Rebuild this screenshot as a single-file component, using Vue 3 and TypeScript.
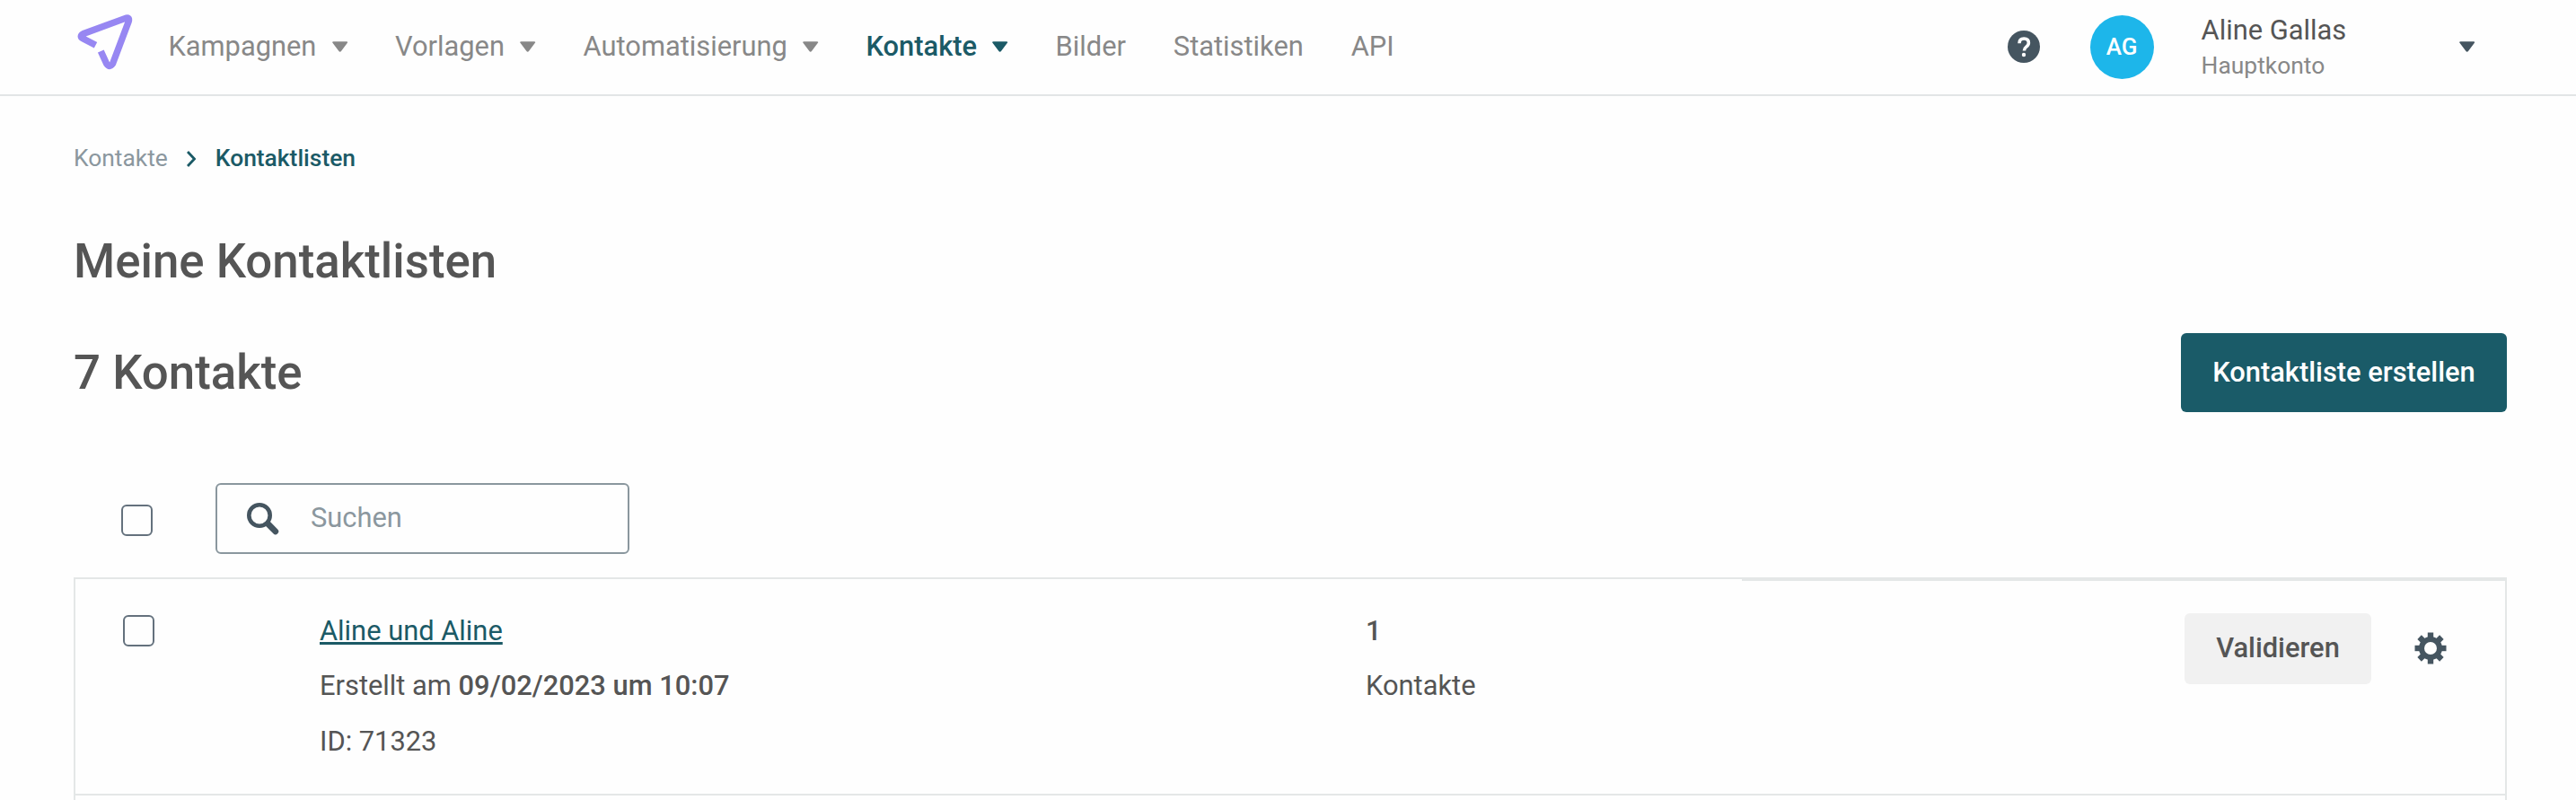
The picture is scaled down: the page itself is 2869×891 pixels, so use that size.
<script setup lang="ts">
interface NavItem { label: string; menu: boolean; active?: boolean }
interface ContactList { name: string; created: string; id: number; count: number }

const nav: NavItem[] = [
  { label: 'Kampagnen', menu: true },
  { label: 'Vorlagen', menu: true },
  { label: 'Automatisierung', menu: true },
  { label: 'Kontakte', menu: true, active: true },
  { label: 'Bilder', menu: false },
  { label: 'Statistiken', menu: false },
  { label: 'API', menu: false },
]
const lists: ContactList[] = [
  { name: 'Aline und Aline', created: '09/02/2023 um 10:07', id: 71323, count: 1 },
]
</script>

<template>
  <div class="page">
    <header class="topbar">
      <svg class="logo" viewBox="0 0 68 68" fill="none">
        <path d="M24.500 36.300 11 29.300Q5.500 26.400 11 23.500L57 6.600Q62.800 4.400 61.200 10L43.500 57Q40 62 36.700 57L30.300 43" />
      </svg>
      <nav class="nav">
        <a v-for="item in nav" :key="item.label" class="nav-item" :class="{ active: item.active }">
          <span>{{ item.label }}</span>
          <svg v-if="item.menu" class="caret" viewBox="0 0 18 12"><path d="M1.500 0h15q2 0 1 1.700l-7 9.300q-1.500 2-3 0L.5 1.700Q-.5 0 1.500 0z" /></svg>
        </a>
      </nav>
      <div class="account">
        <svg class="help" viewBox="0 0 36 36">
          <circle cx="18" cy="18" r="18" />
          <path d="M13 14.200q0-5.200 5.200-5.200t5.200 4.800q0 2.400-2.600 4.300-2.400 1.800-2.400 4.300" />
          <circle class="dot" cx="18" cy="27" r="2.200" />
        </svg>
        <span class="avatar">AG</span>
        <div class="who">
          <span class="name">Aline Gallas</span>
          <span class="role">Hauptkonto</span>
        </div>
        <svg class="caret dark" viewBox="0 0 18 12"><path d="M1.500 0h15q2 0 1 1.700l-7 9.300q-1.500 2-3 0L.5 1.700Q-.5 0 1.500 0z" /></svg>
      </div>
    </header>

    <main class="content">
      <div class="crumbs">
        <span>Kontakte</span>
        <svg class="chevron" viewBox="0 0 10 18"><path d="M1 1l7.500 8L1 17" /></svg>
        <span class="current">Kontaktlisten</span>
      </div>
      <h1 class="heading">Meine Kontaktlisten</h1>
      <div class="summary">
        <h2 class="heading">7 Kontakte</h2>
        <button class="primary">Kontaktliste erstellen</button>
      </div>
      <div class="filter">
        <span class="check" />
        <div class="search">
          <svg class="lens" viewBox="0 0 36 36"><circle cx="14" cy="14" r="11.700" /><path d="M23.500 23.500l8.300 8.300" /></svg>
          <span>Suchen</span>
        </div>
      </div>
      <section class="table">
        <div v-for="list in lists" :key="list.id" class="row">
          <div class="cell select"><span class="check" /></div>
          <div class="cell info">
            <a class="link">{{ list.name }}</a>
            <span>Erstellt am <b>{{ list.created }}</b></span>
            <span>ID: {{ list.id }}</span>
          </div>
          <div class="cell count"><b>{{ list.count }}</b><span>Kontakte</span></div>
          <div class="cell actions">
            <button class="secondary">Validieren</button>
            <svg class="gear" viewBox="-18 -18 36 36">
              <rect v-for="a in [0, 45, 90, 135]" :key="a" x="-3.200" y="-17.500" width="6.400" height="35" :transform="`rotate(${a})`" />
              <circle r="13" /><circle class="hole" r="7" />
            </svg>
          </div>
        </div>
      </section>
    </main>
  </div>
</template>

<style>
body { margin: 0; background: #fefefe; }
</style>
<style scoped>
.page { width: 2869px; height: 891px; overflow: hidden; box-sizing: border-box; font-family: Roboto, sans-serif; font-size: 30.85px; color: #555; background: #fefefe; }
.page * { box-sizing: border-box; }
.topbar { height: 107px; display: flex; align-items: center; border-bottom: 2px solid #e2e5e6; padding: 0 113px 0 82px; }
.logo { width: 68px; height: 68px; margin-top: 14px; align-self: flex-start; flex: none; }
.logo path { stroke: #9787f2; stroke-width: 7.4; stroke-linejoin: round; }
.nav { display: flex; gap: 52.8px; margin: -2px 0 0 37.4px; }
.nav-item { display: flex; align-items: center; gap: 17.4px; color: #888; line-height: 40px; }
.nav-item.active { color: #1b5a66; font-weight: 500; }
.caret { width: 17.4px; height: 12px; fill: currentColor; }
.account { margin-left: auto; display: flex; align-items: center; }
.help { width: 36px; height: 36px; fill: #455560; margin-top: -1px; }
.help path { fill: none; stroke: #fff; stroke-width: 3.6; }
.help .dot { fill: #fff; }
.avatar { width: 71px; height: 71px; border-radius: 50%; background: #1db6ea; color: #fff; font-size: 26px; font-weight: 500; display: flex; align-items: center; justify-content: center; margin: -1px 53px 0 56px; }
.who { display: flex; flex-direction: column; width: 287px; margin-top: 1px; }
.name { line-height: 40px; }
.role { font-size: 26.4px; line-height: 38px; color: #888; }
.dark { color: #455560; margin-top: -2px; }
.content { padding: 0 77px 0 82px; }
.crumbs { display: flex; align-items: center; height: 40px; margin-top: 49px; font-size: 26.4px; color: #8b979e; }
.chevron { width: 10px; height: 18px; margin: 2px 22px 0 21px; fill: none; stroke: #1b5a66; stroke-width: 2.8; }
.current { color: #1b5a66; font-weight: 500; }
.heading { margin: 0; font-size: 52.8px; font-weight: 500; line-height: 60px; color: #555; }
h1.heading { margin-top: 65px; }
.summary { display: flex; justify-content: space-between; align-items: center; height: 88px; margin-top: 50px; }
button { border: 0; font-family: inherit; font-size: 30.85px; font-weight: 500; border-radius: 6px; padding: 0 0 2px; }
.primary { width: 363px; height: 88px; color: #fff; background: #1a5b68; }
.filter { display: flex; align-items: center; height: 79px; margin-top: 79px; padding-left: 53px; }
.check { display: block; width: 35px; height: 35px; border: 2px solid #64717d; border-radius: 6px; flex: none; }
.filter .check { margin-top: 4px; }
.search { display: flex; align-items: center; width: 461px; height: 79px; margin-left: 70px; border: 2px solid #8a979e; border-radius: 6px; padding-left: 33px; color: #8b979e; }
.search span { margin-top: -2px; }
.lens { width: 36px; height: 36px; margin-right: 35px; fill: none; stroke: #455560; stroke-width: 4.6; stroke-linecap: round; }
.lens path { stroke-width: 6.8; }
.table { margin-top: 26px; height: 300px; border: 2px solid #e4e7e7; }
.row { display: grid; grid-template-columns: 272px 1165px 419px 1fr; height: 240px; }
.cell { border-bottom: 2px solid #e4e7e7; display: flex; flex-direction: column; align-items: flex-start; line-height: 61.4px; padding-top: 27px; }
.select { padding: 40px 0 0 53px; }
.actions { border-top: 2px solid #e4e7e7; height: 241px; flex-direction: row; justify-content: flex-end; padding: 36px 65px 0 0; }
.secondary { width: 208px; height: 79px; background: #f1f1f1; color: #555; margin-right: 48px; }
.gear { width: 36px; height: 36px; margin-top: 21px; fill: #455560; }
.gear .hole { fill: #fefefe; }
.link { color: #1b5a66; text-decoration: underline; text-decoration-thickness: 3px; text-decoration-skip-ink: none; }
b { font-weight: 500; }
</style>
